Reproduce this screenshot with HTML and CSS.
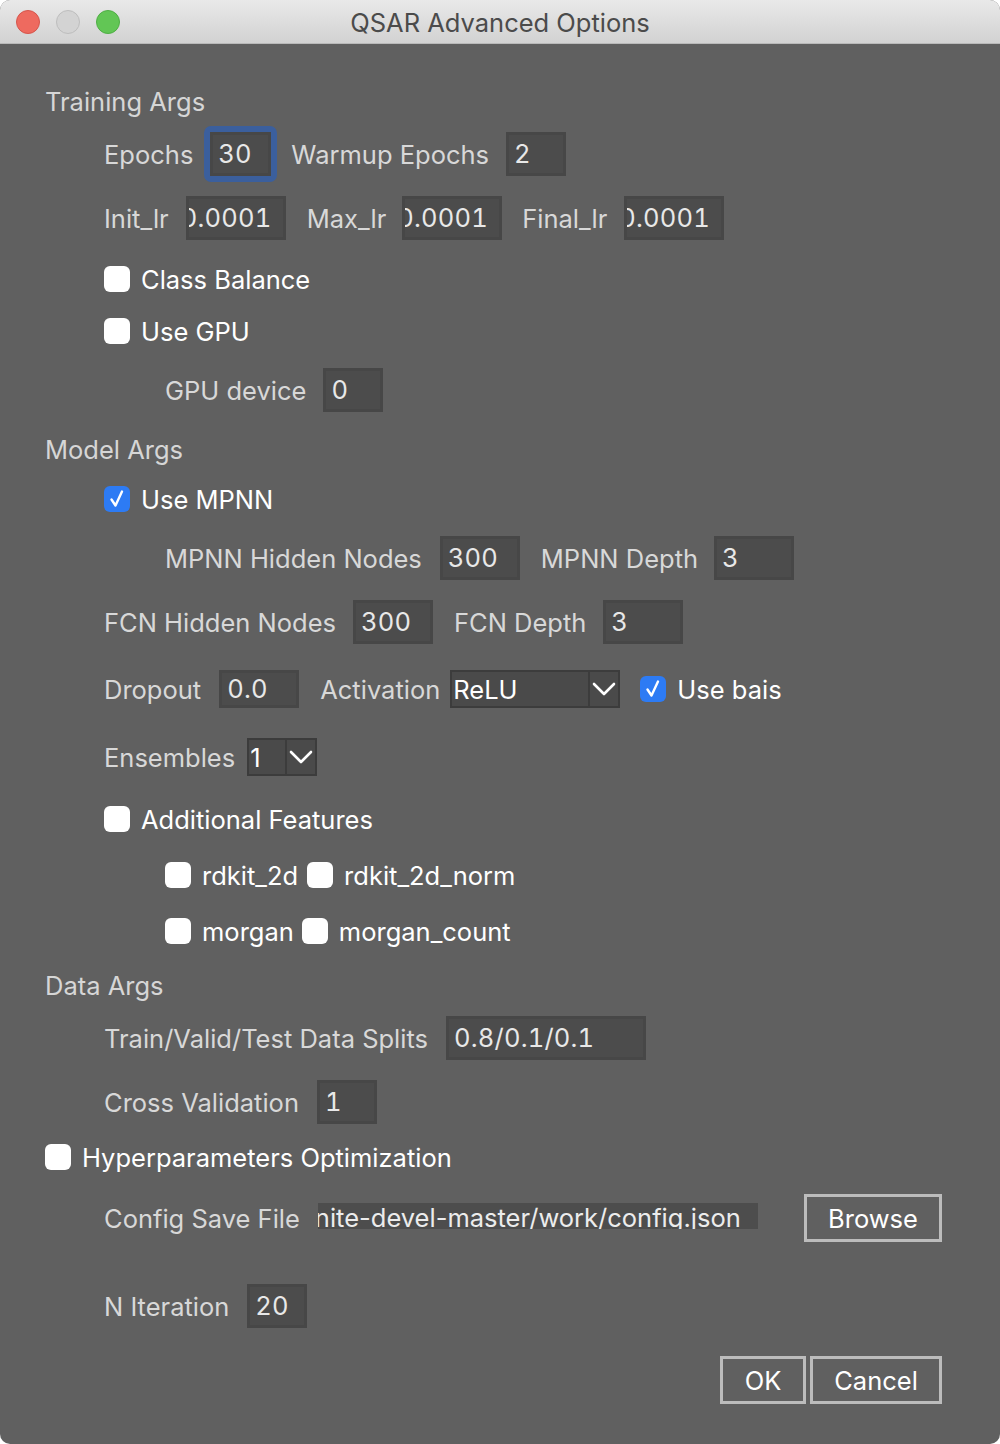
FILE: index.html
```html
<!DOCTYPE html>
<html>
<head>
<meta charset="utf-8">
<link rel="stylesheet" href="styles.css">
</head>
<body>
<div class="window">
  <div class="titlebar">
    <div class="lights">
      <span class="light red"></span>
      <span class="light gray"></span>
      <span class="light green"></span>
    </div>
    <div class="title">QSAR Advanced Options</div>
  </div>
  <div class="content">
    <div class="row header first">Training Args</div>

    <div class="row ind1 g11 h52">
      <span class="lbl">Epochs</span>
      <span class="focus"><span class="field inner">30</span></span>
      <span class="lbl sp14">Warmup Epochs</span>
      <span class="field w60 sp17">2</span>
    </div>

    <div class="row ind1 g16 h44">
      <span class="lbl">Init_lr</span>
      <span class="field w100 sp17 clip"><span class="scroll">0.0001</span></span>
      <span class="lbl sp21">Max_lr</span>
      <span class="field w100 sp16 clip"><span class="scroll">0.0001</span></span>
      <span class="lbl sp20">Final_lr</span>
      <span class="field w100 sp17 clip"><span class="scroll">0.0001</span></span>
    </div>

    <div class="row ind1 g24 h30">
      <span class="cb"></span><span class="cbl">Class Balance</span>
    </div>
    <div class="row ind1 g22 h30">
      <span class="cb"></span><span class="cbl">Use GPU</span>
    </div>
    <div class="row ind2 g22 h44">
      <span class="lbl">GPU device</span>
      <span class="field w60 sp17">0</span>
    </div>

    <div class="row header g21">Model Args</div>
    <div class="row ind1 g19 h30">
      <span class="cb on"><svg viewBox="0 0 26 26" width="26" height="26"><path d="M7.5 13.5 L11.5 19.5 L18 5.5" fill="none" stroke="#fff" stroke-width="2.4" stroke-linecap="round" stroke-linejoin="round"/></svg></span><span class="cbl">Use MPNN</span>
    </div>
    <div class="row ind2 g22 h44">
      <span class="lbl">MPNN Hidden Nodes</span>
      <span class="field w80 sp18">300</span>
      <span class="lbl sp21">MPNN Depth</span>
      <span class="field w80 sp16">3</span>
    </div>
    <div class="row ind1 g20 h44">
      <span class="lbl">FCN Hidden Nodes</span>
      <span class="field w80 sp17">300</span>
      <span class="lbl sp21">FCN Depth</span>
      <span class="field w80 sp17">3</span>
    </div>
    <div class="row ind1 g26 h38">
      <span class="lbl">Dropout</span>
      <span class="field w80 h38f sp18">0.0</span>
      <span class="lbl sp21">Activation</span>
      <span class="select w170 sp10"><span class="sval">ReLU</span><span class="sarrow"><svg viewBox="0 0 26 34" width="26" height="34"><path d="M3 12 L13 22 L23 12" fill="none" stroke="#fff" stroke-width="2.6" stroke-linecap="round" stroke-linejoin="round"/></svg></span></span>
      <span class="cb on sp20"><svg viewBox="0 0 26 26" width="26" height="26"><path d="M7.5 13.5 L11.5 19.5 L18 5.5" fill="none" stroke="#fff" stroke-width="2.4" stroke-linecap="round" stroke-linejoin="round"/></svg></span><span class="cbl">Use bais</span>
    </div>
    <div class="row ind1 g30 h38">
      <span class="lbl">Ensembles</span>
      <span class="select w70 sp12"><span class="sval">1</span><span class="sarrow"><svg viewBox="0 0 26 34" width="26" height="34"><path d="M3 12 L13 22 L23 12" fill="none" stroke="#fff" stroke-width="2.6" stroke-linecap="round" stroke-linejoin="round"/></svg></span></span>
    </div>
    <div class="row ind1 g28 h30">
      <span class="cb"></span><span class="cbl">Additional Features</span>
    </div>
    <div class="row ind2 g26 h30">
      <span class="cb"></span><span class="cbl">rdkit_2d</span>
      <span class="cb sp9"></span><span class="cbl">rdkit_2d_norm</span>
    </div>
    <div class="row ind2 g26 h30">
      <span class="cb"></span><span class="cbl">morgan</span>
      <span class="cb sp8"></span><span class="cbl">morgan_count</span>
    </div>

    <div class="row header g23">Data Args</div>
    <div class="row ind1 g15 h44">
      <span class="lbl">Train/Valid/Test Data Splits</span>
      <span class="field w200 sp18">0.8/0.1/0.1</span>
    </div>
    <div class="row ind1 g20 h44">
      <span class="lbl">Cross Validation</span>
      <span class="field w60 sp18">1</span>
    </div>
    <div class="row ind0 g18 h30">
      <span class="cb"></span><span class="cbl">Hyperparameters Optimization</span>
    </div>
    <div class="row ind1 padr g22 h48">
      <span class="lbl">Config Save File</span>
      <span class="pathbox sp18"><span class="pathtext">nite-devel-master/work/config.json</span></span>
      <span class="btn browse">Browse</span>
    </div>
    <div class="row ind1 g42 h44">
      <span class="lbl">N Iteration</span>
      <span class="field w60 sp18">20</span>
    </div>
    <div class="row actions g28 h48">
      <span class="btn ok">OK</span>
      <span class="btn cancel">Cancel</span>
    </div>
  </div>
</div>
</body>
</html>
```
FILE: styles.css
```css
html, body {
  margin: 0;
  padding: 0;
  background: #ffffff;
}
body {
  width: 1000px;
  height: 1444px;
  font-family: "Inter", "Noto Sans", sans-serif;
}
.window {
  width: 1000px;
  height: 1444px;
  background: #606060;
  border-radius: 10px;
  overflow: hidden;
  box-sizing: border-box;
  display: flex;
  flex-direction: column;
}
.titlebar {
  height: 44px;
  flex: none;
  background: linear-gradient(#e9e9e9, #d2d2d2);
  border-bottom: 1px solid #b9b9b9;
  box-sizing: border-box;
  display: flex;
  align-items: center;
  position: relative;
}
.lights {
  display: flex;
  gap: 16px;
  padding-left: 16px;
}
.light {
  width: 24px;
  height: 24px;
  border-radius: 50%;
  box-sizing: border-box;
}
.light.red { background: #ee6a5f; border: 1px solid #d5554c; }
.light.gray { background: #d3d3d3; border: 1px solid #bdbdbd; }
.light.green { background: #62c655; border: 1px solid #4fae45; }
.title {
  position: absolute;
  left: 0;
  right: 0;
  top: 1px;
  height: 44px;
  line-height: 44px;
  text-align: center;
  font-size: 25.5px;
  color: #4b4b4b;
}
.content {
  display: flex;
  flex-direction: column;
}
.row {
  display: flex;
  align-items: center;
  flex: none;
  font-size: 25.5px;
  white-space: nowrap;
}
.header {
  height: 32px;
  padding-left: 45px;
  color: #d6d6d6;
}
.first { margin-top: 41px; }
.ind0 { padding-left: 45px; }
.ind1 { padding-left: 104px; }
.ind2 { padding-left: 165px; }
.padr { padding-right: 58px; }

.h30 { height: 30px; }
.h38 { height: 38px; }
.h44 { height: 44px; }
.h48 { height: 48px; }
.h52 { height: 52px; }

.g11 { margin-top: 11px; }
.g15 { margin-top: 15px; }
.g16 { margin-top: 16px; }
.g18 { margin-top: 18px; }
.g19 { margin-top: 19px; }
.g20 { margin-top: 20px; }
.g21 { margin-top: 21px; }
.g22 { margin-top: 22px; }
.g23 { margin-top: 23px; }
.g24 { margin-top: 24px; }
.g26 { margin-top: 26px; }
.g28 { margin-top: 28px; }
.g30 { margin-top: 30px; }
.g42 { margin-top: 42px; }

.sp8 { margin-left: 8px; }
.sp9 { margin-left: 9px; }
.sp10 { margin-left: 10px; }
.sp12 { margin-left: 12px; }
.sp14 { margin-left: 14px; }
.sp16 { margin-left: 16px; }
.sp17 { margin-left: 17px; }
.sp18 { margin-left: 18px; }
.sp20 { margin-left: 20px; }
.sp21 { margin-left: 21px; }

.lbl {
  color: #d8d8d8;
}
.cbl {
  color: #ffffff;
  margin-left: 11px;
}
.field {
  height: 44px;
  box-sizing: border-box;
  background: #4c4c4c;
  border: 3px solid #474747;
  color: #e8e8e8;
  display: flex;
  align-items: center;
  padding-left: 5px;
  padding-bottom: 1px;
  flex: none;
  font-variant-numeric: tabular-nums;
  letter-spacing: 0.2px;
}
.h38f { height: 38px; }
.w60 { width: 60px; }
.w80 { width: 80px; }
.w100 { width: 100px; }
.w200 { width: 200px; }
.w70 { width: 70px; }
.w170 { width: 170px; }
.clip {
  overflow: hidden;
  padding-left: 0;
}
.scroll {
  margin-left: -8px;
}
.focus {
  margin-left: 11px;
  width: 73px;
  height: 56px;
  box-sizing: border-box;
  border: 6px solid #3b5f9d;
  border-radius: 7px;
  display: flex;
  align-items: center;
  justify-content: center;
  flex: none;
}
.focus .inner {
  width: 61px;
  height: 44px;
  border-width: 3px;
}
.cb {
  width: 26px;
  height: 26px;
  border-radius: 6px;
  background: #ffffff;
  flex: none;
  display: flex;
  margin-top: -1px;
}
.cb.on {
  background: #2d7bf4;
}
.select {
  height: 38px;
  box-sizing: border-box;
  background: #4a4a4a;
  border: 2px solid #3c3c3c;
  display: flex;
  flex: none;
  color: #ffffff;
}
.sval {
  flex: 1;
  display: flex;
  align-items: center;
  padding-left: 1px;
}
.sarrow {
  width: 28px;
  border-left: 2px solid #3c3c3c;
  display: flex;
  align-items: center;
  justify-content: center;
}
.pathbox {
  width: 440px;
  height: 26px;
  background: #4d4d4d;
  overflow: hidden;
  flex: none;
  color: #ececec;
  position: relative;
  margin-top: -4px;
}
.pathtext {
  position: absolute;
  left: -3px;
  top: 0;
  line-height: 30px;
}
.btn {
  box-sizing: border-box;
  height: 48px;
  border: 3px solid #bcbcbc;
  color: #ffffff;
  display: flex;
  align-items: center;
  justify-content: center;
  flex: none;
}
.browse {
  width: 138px;
  margin-left: auto;
}
.actions {
  justify-content: flex-end;
  padding-right: 58px;
  gap: 4px;
}
.ok { width: 86px; }
.cancel { width: 132px; }
```
